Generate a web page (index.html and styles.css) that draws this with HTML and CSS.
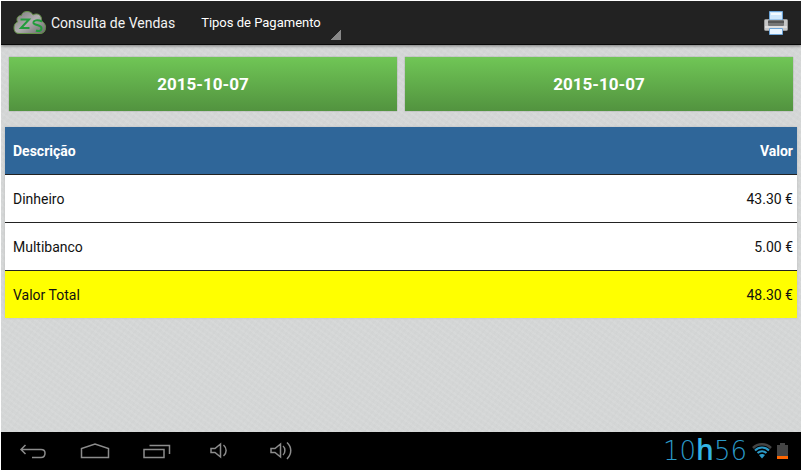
FILE: index.html
```html
<!DOCTYPE html>
<html lang="pt">
<head>
  <title>Consulta de Vendas</title>
  <meta charset="UTF-8" />
  <link rel="stylesheet" href="styles.css">
</head>
<body>
  <header class="action-bar">
    <svg class="logo" viewBox="0 0 34 26" aria-hidden="true">
      <defs>
        <linearGradient id="cloud" x1="0" y1="0" x2="1" y2="1">
          <stop offset="0" stop-color="#777" />
          <stop offset="0.5" stop-color="#b0aeb0" />
          <stop offset="1" stop-color="#666" />
        </linearGradient>
      </defs>
      <path d="M6 23.500C2.500 23.500 1 21 1 18C1 15 2 13 4.500 12C3 8 5 5.500 8.500 5.500C9 2.500 11.500 1.500 14 1.500C17 1.500 19 3 20 5C23 3 27 4 28 7C29 9 28.500 10 28 11C31 12 33 15 32.500 18.500C32 22 30 23.500 27 23.500Z" fill="url(#cloud)" stroke="#659248" />
      <path d="M7.500 9.500H16L8 18H16.500" fill="none" stroke="#229c3c" stroke-width="2" />
      <path d="M29 11.500C25 9.500 20 10 20.500 13C21 15.500 28.500 14.500 28.500 18C28.500 21.500 25 21.500 23 20.500" fill="none" stroke="#229c3c" stroke-width="2" />
    </svg>
    <h1>Consulta de Vendas</h1>
    <button class="spinner" type="button">Tipos de Pagamento</button>
    <button class="print" type="button" aria-label="Imprimir">
      <svg viewBox="0 0 24 24" aria-hidden="true">
        <rect x="0.500" y="8.500" width="23" height="11" rx="1" fill="#c6c6c6" stroke="#999" />
        <path d="M5.500 9V0.500H18.500V9Z" fill="#cfe7fc" stroke="#6ea5d8" />
        <path d="M7 2H17V4H7Z" fill="#f3faff" />
        <rect x="4" y="9" width="16" height="6" rx="1" fill="#777" />
        <rect x="4" y="10" width="16" height="2" fill="#555" />
        <rect x="1" y="15" width="22" height="2" fill="#dedede" />
        <path d="M5.500 17.500H18.500V23.500H5.500Z" fill="#e9f5ff" stroke="#6ea5d8" />
      </svg>
    </button>
  </header>

  <main>
    <div class="dates">
      <button type="button" aria-label="Data inicial 2015-10-07">2015-10-07</button>
      <button type="button" aria-label="Data final 2015-10-07">2015-10-07</button>
    </div>

    <table class="sales">
      <thead>
        <tr><th>Descrição</th><th>Valor</th></tr>
      </thead>
      <tbody>
        <tr><td>Dinheiro</td><td>43.30 €</td></tr>
        <tr><td>Multibanco</td><td>5.00 €</td></tr>
      </tbody>
      <tfoot>
        <tr><td>Valor Total</td><td>48.30 €</td></tr>
      </tfoot>
    </table>
  </main>

  <footer class="system-bar">
    <button type="button" aria-label="Voltar">
      <svg width="28" height="20" viewBox="0 0 28 20"><path d="M6.500 4L2 8.500L6.500 13M2 8.500H22C24.500 8.500 26 10 26 12C26 14.500 24.500 16.500 22 16.500H13" /></svg>
    </button>
    <button type="button" aria-label="Início">
      <svg width="30" height="20" viewBox="0 0 30 20"><path d="M1.500 16.500V7.500L15 3L28.500 7.500V16.500Z" /></svg>
    </button>
    <button type="button" aria-label="Recentes">
      <svg width="28" height="20" viewBox="0 0 28 20"><path d="M1 8.500H21V16.500H1ZM6.500 4.500H26.500V13" /></svg>
    </button>
    <button type="button" aria-label="Baixar volume">
      <svg width="18" height="20" viewBox="0 0 18 20"><path d="M1 7.500H5L10.500 3V16L5 11.500H1ZM13.500 4C17 7 17 12 13.500 15" /></svg>
    </button>
    <button type="button" aria-label="Aumentar volume">
      <svg width="22" height="20" viewBox="0 0 22 20"><path d="M1 7.500H5L10.500 3V16L5 11.500H1ZM13 5C15.500 7 15.500 12 13 14M17 1.500C22 6 22 13 17 18" /></svg>
    </button>

    <div class="status">
      <time class="clock" datetime="10:56">10<b>h</b>56</time>
      <svg width="20" height="16" viewBox="0 0 20 16" aria-hidden="true">
        <path d="M1 5C6 0 14 0 19 5" fill="none" stroke="#444" stroke-width="2.500" />
        <path d="M3 7.500C7 3.500 13 3.500 17 7.500M5.500 10C8 7.500 12 7.500 14.500 10" fill="none" stroke="#2b9ac8" stroke-width="2" />
        <path d="M7 12C8.500 10.500 11.500 10.500 13 12L10 15.500Z" fill="#2b9ac8" />
      </svg>
      <svg width="11" height="16" viewBox="0 0 11 16" aria-hidden="true">
        <path d="M0 2H3V0H8V2H11V13H0Z" fill="#444" />
        <path d="M0 13H11V16H0Z" fill="#f60" />
      </svg>
    </div>
  </footer>
</body>
</html>
```
FILE: styles.css
```css
* {
  box-sizing: border-box;
}
body {
  margin: 0;
  min-height: 100vh;
  display: flex;
  flex-direction: column;
  border: 1px solid #fff;
  font-family: Roboto, sans-serif;
  font-size: 14px;
  color: #111;
  background:
    repeating-linear-gradient(35deg, transparent 0 3px, rgba(255, 255, 255, 0.08) 3px 5px),
    repeating-linear-gradient(125deg, #d2d4d4 0 2px, #d4d6d6 2px 5px);
}
button {
  padding: 0;
  border: 0;
  background: none;
  font-family: inherit;
  cursor: pointer;
}
svg {
  display: block;
}
.action-bar {
  display: flex;
  align-items: center;
  height: 44px;
  padding: 0 13px 0 12px;
  background: #222;
  border-bottom: 1px solid #080808;
  box-shadow: 0 1px 3px #777;
  color: #f3f3f3;
}
.logo {
  width: 34px;
  height: 26px;
  margin-right: 4px;
}
h1 {
  margin: 0;
  font-size: 14px;
  font-weight: 400;
}
.spinner {
  align-self: stretch;
  width: 152px;
  margin-left: 18px;
  padding-left: 8px;
  color: #fff;
  font-size: 13px;
  text-align: left;
  background: linear-gradient(135deg, transparent 50%, #888 50%) right 4px bottom 4px / 10px 10px no-repeat;
}
.print {
  margin-left: auto;
}
.print svg {
  width: 24px;
  height: 24px;
}
main {
  flex: 1;
  padding: 12px 4px;
}
.dates {
  display: flex;
  gap: 8px;
  padding: 0 4px;
  margin-bottom: 16px;
}
.dates button {
  flex: 1;
  height: 54px;
  color: #fff;
  font-size: 17px;
  font-weight: 700;
  background: linear-gradient(#70c656, #52933f);
  box-shadow: 0 0 1px #777;
}
.sales {
  width: 100%;
  border-collapse: separate;
  border-spacing: 0;
  background: #fff;
  box-shadow: 0 0 2px #bbb;
}
.sales th,
.sales td {
  height: 48px;
  padding: 0 4px 0 8px;
  text-align: left;
  border-bottom: 1px solid #222;
}
.sales th {
  color: #fff;
  background: #2f6699;
}
.sales th:last-child,
.sales td:last-child {
  text-align: right;
}
.sales tfoot td {
  height: 47px;
  background: #ff0;
  border-bottom: 0;
}
.system-bar {
  display: flex;
  align-items: center;
  height: 38px;
  padding: 0 13px 0 1px;
  background: #000;
}
.system-bar button {
  display: flex;
  justify-content: center;
  width: 62px;
}
.system-bar button path {
  fill: none;
  stroke: #8c8c8c;
  stroke-width: 1.5;
}
.status {
  display: flex;
  align-items: center;
  gap: 5px;
  margin-left: auto;
}
.clock {
  font-family: "DejaVu Sans", sans-serif;
  font-size: 26px;
  font-weight: 200;
  line-height: 36px;
  color: #2b9ac8;
}
.clock b {
  font-family: "Open Sans", sans-serif;
  font-size: 28px;
  font-weight: 600;
  line-height: 28px;
  color: #33b5e5;
}
```
